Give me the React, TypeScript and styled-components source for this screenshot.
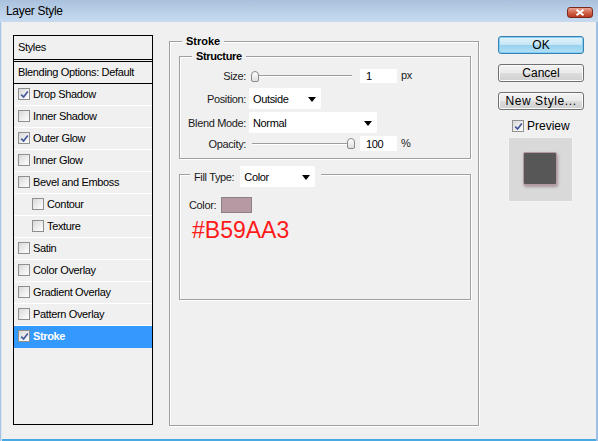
import React from 'react'
import styled, { createGlobalStyle } from 'styled-components'

const GlobalStyle = createGlobalStyle`
  html, body {
    margin: 0;
    padding: 0;
    background: #f0f0f0;
  }
  body {
    font-family: "Liberation Sans", Arial, sans-serif;
  }
`

const Window = styled.div`
  width: 598px;
  height: 441px;
  box-sizing: border-box;
  background: #f0f0f0;
  display: flex;
  flex-direction: column;
  overflow: hidden;
  box-shadow: inset 1px 0 0 #a9c4e3, inset 2px 0 0 #dbe7f4, inset -2px 0 0 #9cc0e6, inset 0 -2px 0 #4aa8e2;
`

const TitleBar = styled.div`
  height: 22px;
  flex: none;
  display: flex;
  align-items: center;
  justify-content: space-between;
  padding: 0 5px 0 6px;
  background: linear-gradient(#a9c1dd, #bcd2ea 60%, #c6daef);
`

const Title = styled.span`
  font-size: 12px;
  letter-spacing: -0.3px;
  color: #000;
`

const CloseButton = styled.div`
  width: 26px;
  height: 11px;
  margin-top: 3px;
  box-sizing: border-box;
  border: 1px solid #7a2a20;
  border-radius: 3px;
  background: linear-gradient(#e8a594, #d1664e 50%, #b8391f);
  display: flex;
  align-items: center;
  justify-content: center;
`

const Body = styled.div`
  flex: 1;
  display: flex;
  align-items: flex-start;
  padding: 13px 0 0 13px;
`

const StyleList = styled.div`
  width: 140px;
  height: 390px;
  box-sizing: border-box;
  border: 1px solid #000;
  margin-right: 16px;
  font-size: 11px;
  letter-spacing: -0.35px;
  color: #000;
`

const ListHeader = styled.div`
  height: 23px;
  line-height: 23px;
  padding-left: 4px;
  border-bottom: 3px double #000;
`

const BlendingRow = styled.div`
  height: 21px;
  line-height: 20px;
  padding-left: 4px;
  border-bottom: 1px solid #000;
`

const ListRow = styled.div<{ $indent?: boolean; $selected?: boolean }>`
  height: 20px;
  padding-bottom: 1px;
  display: flex;
  align-items: center;
  gap: 3px;
  padding-left: ${p => (p.$indent ? '18px' : '4px')};
  border-bottom: 1px solid ${p => (p.$selected ? '#3399ff' : '#ffffff')};
  background: ${p => (p.$selected ? '#3399ff' : 'transparent')};
  color: ${p => (p.$selected ? '#fff' : '#000')};
  font-weight: ${p => (p.$selected ? 'bold' : 'normal')};
`

const CheckBox = styled.span<{ $size?: number }>`
  width: ${p => p.$size ?? 12}px;
  height: ${p => p.$size ?? 12}px;
  flex: none;
  box-sizing: border-box;
  border: 1px solid #8e8f8f;
  background: linear-gradient(135deg, #d8d8d8, #f4f4f4 70%, #fdfdfd);
  display: flex;
  align-items: center;
  justify-content: center;
`

const Check = ({ checked, size }: { checked?: boolean; size?: number }) => (
  <CheckBox $size={size}>
    {checked && (
      <svg width="9" height="9" viewBox="0 0 9 9">
        <path d="M1.2 4.6 L3.6 7 L7.8 1.6" fill="none" stroke="#43589a" strokeWidth="1.7" />
      </svg>
    )}
  </CheckBox>
)

const Middle = styled.div`
  width: 310px;
  margin-right: 19px;
  padding-top: 6px;
`

const Group = styled.div<{ $height?: number; $top?: number }>`
  position: relative;
  box-sizing: border-box;
  border: 1px solid #a0a0a0;
  box-shadow: 1px 1px 0 #fff, inset 1px 1px 0 #fff;
  ${p => (p.$height ? `height: ${p.$height}px;` : '')}
  margin-top: ${p => p.$top ?? 0}px;
`

const StrokeGroup = styled(Group)`
  padding: 14px 7px 0 9px;
`

const StructureGroup = styled(Group)`
  padding: 10px 0 7px 0;
  display: grid;
  grid-template-columns: 66px 1fr;
  grid-template-rows: 18px 21px 21px 15px;
  column-gap: 3px;
  row-gap: 3px;
  font-size: 11px;
  letter-spacing: -0.35px;
`

const Legend = styled.div<{ $left?: number }>`
  position: absolute;
  top: -8px;
  left: ${p => p.$left ?? 12}px;
  padding: 0 4px;
  line-height: 14px;
  background: #f0f0f0;
  font-size: 11px;
  font-weight: bold;
  color: #000;
`

const FieldLabel = styled.div`
  display: flex;
  align-items: center;
  justify-content: flex-end;
  color: #1a1a1a;
`

const Controls = styled.div`
  display: flex;
  align-items: center;
  gap: 4px;
`

const Slider = styled.div<{ $end?: boolean }>`
  width: 107px;
  height: 14px;
  box-sizing: border-box;
  display: flex;
  align-items: center;
  justify-content: ${p => (p.$end ? 'flex-end' : 'flex-start')};
  padding: 0 ${p => (p.$end ? '1px' : '0')} 0 ${p => (p.$end ? '0' : '2px')};
  background: linear-gradient(transparent 6px, #9c9c9c 6px, #9c9c9c 7px, #ffffff 7px, #ffffff 8px, transparent 8px)
    no-repeat 3px 0 / 100px 100%;
`

const Thumb = styled.div`
  width: 8px;
  height: 11px;
  box-sizing: border-box;
  border: 1px solid #8a8a8a;
  border-radius: 4px 4px 2px 2px;
  background: linear-gradient(#ffffff, #dedede);
`

const NumberBox = styled.div<{ $h?: number }>`
  width: 37px;
  height: ${p => p.$h ?? 14}px;
  box-sizing: border-box;
  background: #fff;
  padding-left: 6px;
  display: flex;
  align-items: center;
  font-size: 11px;
  color: #000;
`

const Unit = styled.span`
  color: #1a1a1a;
  margin-top: -2px;
`

const Select = styled.div<{ $width: number }>`
  width: ${p => p.$width}px;
  height: 21px;
  box-sizing: border-box;
  background: #fff;
  display: flex;
  align-items: center;
  justify-content: space-between;
  padding: 1px 5px 0 4px;
  font-size: 11px;
  letter-spacing: -0.35px;
  color: #000;
`

const Arrow = () => (
  <svg width="8" height="5" viewBox="0 0 8 5">
    <polygon points="0,0 8,0 4,5" fill="#000" />
  </svg>
)

const FillGroup = styled(Group)`
  padding: 22px 0 0 9px;
  font-size: 11px;
  letter-spacing: -0.35px;
`

const FillLegend = styled.div`
  position: absolute;
  top: -9px;
  left: 10px;
  padding: 0 6px 0 4px;
  display: flex;
  align-items: center;
  gap: 6px;
  background: #f0f0f0;
  color: #1a1a1a;
`

const ColorRow = styled.div`
  display: flex;
  align-items: center;
  gap: 5px;
  height: 16px;
  color: #1a1a1a;
`

const Swatch = styled.div`
  width: 31px;
  height: 16px;
  box-sizing: border-box;
  border: 1px solid #8d7f84;
  background: #b59aa3;
`

const HexText = styled.div`
  margin: 6px 0 0 3px;
  font-size: 23px;
  line-height: 23px;
  letter-spacing: 0;
  color: #ff1a1a;
`

const Side = styled.div`
  width: 86px;
  padding-top: 1px;
  display: flex;
  flex-direction: column;
`

const DialogButton = styled.div<{ $default?: boolean; $wide?: boolean }>`
  height: 18px;
  box-sizing: border-box;
  margin-bottom: 10px;
  border: 1px solid ${p => (p.$default ? '#3c7fb1' : '#707070')};
  border-radius: 3px;
  background: ${p =>
    p.$default
      ? 'linear-gradient(#e5f4fc, #c4e5f6 50%, #98d1ef 51%, #b3e0f5)'
      : 'linear-gradient(#f2f2f2, #ebebeb 50%, #dddddd 51%, #cfcfcf)'};
  box-shadow: ${p => (p.$default ? 'inset 0 0 0 1px #7fd0f5' : 'inset 0 0 0 1px #fcfcfc')};
  display: flex;
  align-items: center;
  justify-content: center;
  font-size: 12px;
  letter-spacing: ${p => (p.$wide ? '0.6px' : '0')};
  color: #000;
`

const PreviewRow = styled.label`
  display: flex;
  align-items: center;
  gap: 3px;
  margin: -1px 0 0 14px;
  font-size: 12px;
  color: #000;
`

const PreviewBox = styled.div`
  width: 65px;
  height: 65px;
  margin: 4px 0 0 10px;
  box-sizing: border-box;
  border: 1px solid #f4f4f4;
  background: #d9d9d9;
  display: flex;
  align-items: center;
  justify-content: center;
`

const PreviewSquare = styled.div`
  width: 32px;
  height: 31px;
  margin: 0 1px 2px 0;
  background: #575758;
  border-radius: 1px;
  box-shadow: 0 0 0 1px #b59aa3, 1px 2px 3px 1px rgba(130, 95, 105, 0.55);
`

type Layer = { name: string; checked?: boolean; indent?: boolean; selected?: boolean }

const layers: Layer[] = [
  { name: 'Drop Shadow', checked: true },
  { name: 'Inner Shadow' },
  { name: 'Outer Glow', checked: true },
  { name: 'Inner Glow' },
  { name: 'Bevel and Emboss' },
  { name: 'Contour', indent: true },
  { name: 'Texture', indent: true },
  { name: 'Satin' },
  { name: 'Color Overlay' },
  { name: 'Gradient Overlay' },
  { name: 'Pattern Overlay' },
  { name: 'Stroke', checked: true, selected: true },
]

export default function App() {
  return (
    <>
      <GlobalStyle />
      <Window>
        <TitleBar>
          <Title>Layer Style</Title>
          <CloseButton>
            <svg width="10" height="7" viewBox="0 0 10 7">
              <path d="M1.5 0.8 L8.5 6.2 M8.5 0.8 L1.5 6.2" stroke="#fff" strokeWidth="2" />
            </svg>
          </CloseButton>
        </TitleBar>
        <Body>
          <StyleList>
            <ListHeader>Styles</ListHeader>
            <BlendingRow>Blending Options: Default</BlendingRow>
            {layers.map(l => (
              <ListRow key={l.name} $indent={l.indent} $selected={l.selected}>
                <Check checked={l.checked} />
                <span>{l.name}</span>
              </ListRow>
            ))}
          </StyleList>

          <Middle>
            <StrokeGroup $height={385}>
              <Legend>Stroke</Legend>
              <StructureGroup>
                <Legend>Structure</Legend>
                <FieldLabel>Size:</FieldLabel>
                <Controls>
                  <Slider>
                    <Thumb />
                  </Slider>
                  <NumberBox>1</NumberBox>
                  <Unit>px</Unit>
                </Controls>
                <FieldLabel>Position:</FieldLabel>
                <Controls>
                  <Select $width={72}>
                    Outside
                    <Arrow />
                  </Select>
                </Controls>
                <FieldLabel>Blend Mode:</FieldLabel>
                <Controls>
                  <Select $width={128}>
                    Normal
                    <Arrow />
                  </Select>
                </Controls>
                <FieldLabel>Opacity:</FieldLabel>
                <Controls>
                  <Slider $end>
                    <Thumb />
                  </Slider>
                  <NumberBox $h={15}>100</NumberBox>
                  <Unit>%</Unit>
                </Controls>
              </StructureGroup>

              <FillGroup $height={126} $top={15}>
                <FillLegend>
                  Fill Type:
                  <Select $width={75}>
                    Color
                    <Arrow />
                  </Select>
                </FillLegend>
                <ColorRow>
                  Color:
                  <Swatch />
                </ColorRow>
                <HexText>#B59AA3</HexText>
              </FillGroup>
            </StrokeGroup>
          </Middle>

          <Side>
            <DialogButton $default>OK</DialogButton>
            <DialogButton>Cancel</DialogButton>
            <DialogButton $wide>New Style...</DialogButton>
            <PreviewRow>
              <Check checked size={12} />
              Preview
            </PreviewRow>
            <PreviewBox>
              <PreviewSquare />
            </PreviewBox>
          </Side>
        </Body>
      </Window>
    </>
  )
}
